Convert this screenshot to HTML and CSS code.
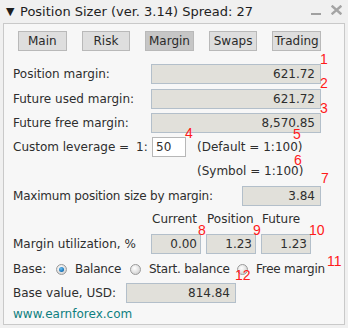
FILE: index.html
```html
<!DOCTYPE html>
<html>
<head>
<meta charset="utf-8">
<link rel="stylesheet" href="styles.css">
</head>
<body>
<div class="window">
  <div class="titlebar">
    <span class="arrow">▼</span>
    <span class="title">Position Sizer (ver. 3.14) Spread: 27</span>
    <span class="tb-icons">
      <span class="minimize"></span>
      <svg class="close" width="11" height="10" viewBox="0 0 11 10"><path d="M1.5 1.5 L9.5 8.5 M9.5 1.5 L1.5 8.5" stroke="#a4a4a4" stroke-width="2.4" stroke-linecap="square"/></svg>
    </span>
  </div>
  <div class="panel">
    <div class="tabs">
      <span class="tab">Main</span>
      <span class="tab">Risk</span>
      <span class="tab active">Margin</span>
      <span class="tab">Swaps</span>
      <span class="tab">Trading</span>
    </div>
    <div class="row r1"><span class="label">Position margin:</span><span class="field wide">621.72</span></div>
    <div class="row r2"><span class="label">Future used margin:</span><span class="field wide">621.72</span></div>
    <div class="row r3"><span class="label">Future free margin:</span><span class="field wide">8,570.85</span></div>
    <div class="row r4">
      <span class="label lev">Custom leverage =</span>
      <span class="ratio">1:</span>
      <span class="input">50</span>
      <span class="note">(Default = 1:100)</span>
    </div>
    <div class="row r5"><span class="note sym">(Symbol = 1:100)</span></div>
    <div class="row r6"><span class="label tight">Maximum position size by margin:</span><span class="field mid">3.84</span></div>
    <div class="row hdr">
      <span class="col">Current</span><span class="col">Position</span><span class="col">Future</span>
    </div>
    <div class="row r7">
      <span class="label">Margin utilization, %</span>
      <span class="cells"><span class="field small">0.00</span><span class="field small">1.23</span><span class="field small">1.23</span></span>
    </div>
    <div class="row r8">
      <span class="base">Base:</span>
      <span class="radio on"></span><span class="rlabel w1">Balance</span>
      <span class="radio"></span><span class="rlabel w2">Start. balance</span>
      <span class="radio"></span><span class="rlabel">Free margin</span>
    </div>
    <div class="row r9"><span class="label bv">Base value, USD:</span><span class="field bval">814.84</span></div>
    <div class="row r10"><span class="link">www.earnforex.com</span></div>
  </div>
  <span class="ann a1">1</span>
  <span class="ann a2">2</span>
  <span class="ann a3">3</span>
  <span class="ann a4">4</span>
  <span class="ann a5">5</span>
  <span class="ann a6">6</span>
  <span class="ann a7">7</span>
  <span class="ann a8">8</span>
  <span class="ann a9">9</span>
  <span class="ann a10">10</span>
  <span class="ann a11">11</span>
  <span class="ann a12">12</span>
</div>
</body>
</html>
```
FILE: styles.css
```css
* { box-sizing: border-box; }
html, body { margin: 0; padding: 0; }
body {
  background: #f0f0f0;
  font-family: "DejaVu Sans", sans-serif;
  font-size: 12px;
  color: #2e2e2e;
  white-space: nowrap;
}
.window {
  position: relative;
  width: 348px;
  height: 328px;
  background: #f0f0f0;
}
.titlebar {
  height: 23px;
  display: flex;
  align-items: center;
  padding-left: 6px;
  font-size: 13px;
  color: #1e1e1e;
}
.arrow { font-size: 11px; width: 14px; }
.title { flex: 1; }
.tb-icons { display: flex; align-items: center; padding-right: 6px; }
.minimize {
  display: block;
  width: 10px;
  height: 2px;
  background: #a0a0a0;
  margin-top: 5px;
  margin-right: 10px;
}
.close { display: block; margin-top: -3px; }
.panel {
  margin: 0 3px 0 3px;
  height: 302px;
  border: 1px solid #c9c9c9;
  background: #f7f7f7;
  padding: 7px 23px 0 9px;
}
.tabs {
  display: flex;
  gap: 15px;
  margin-left: 5px;
}
.tab {
  width: 50px;
  height: 20px;
  background: #dedede;
  border: 1px solid #b9b9b9;
  display: flex;
  align-items: center;
  justify-content: center;
  color: #2a2a2a;
}
.tab.active { background: #c6c6c6; }
.row {
  display: flex;
  align-items: center;
  height: 20px;
}
.label { flex: 1; }
.tight { letter-spacing: -0.2px; }
.field {
  height: 20px;
  background: #e1e0da;
  border: 1px solid #b3bfca;
  display: flex;
  align-items: center;
  justify-content: flex-end;
  padding-right: 5px;
  flex: none;
}
.wide { width: 170px; }
.mid { width: 79px; }
.small { width: 50px; padding-right: 3px; }
.r1 { margin-top: 13px; }
.r2 { margin-top: 5px; }
.r3 { margin-top: 4px; }
.r4 { margin-top: 4px; }
.lev { flex: none; width: 123px; }
.ratio { width: 16px; }
.input {
  width: 34px;
  height: 20px;
  background: #ffffff;
  border: 1px solid #b7b7b7;
  display: flex;
  align-items: center;
  padding-left: 3px;
}
.note { margin-left: 11px; }
.r5 { margin-top: 4px; }
.sym { margin-left: 184px; }
.r6 { margin-top: 5px; }
.hdr { margin-top: 3px; padding-left: 139px; gap: 5px; }
.col { width: 50px; flex: none; }
.r7 { margin-top: 5px; }
.cells { display: flex; gap: 5px; margin-right: 10px; }
.r8 { margin-top: 5px; }
.base { width: 43px; flex: none; }
.radio {
  width: 11px;
  height: 11px;
  border-radius: 50%;
  border: 1px solid #9a9a9a;
  background: radial-gradient(circle at 40% 35%, #ffffff 0%, #e6e6e6 45%, #c4c4c4 100%);
  position: relative;
  flex: none;
}
.radio.on::after {
  content: "";
  position: absolute;
  left: 2px;
  top: 2px;
  width: 5px;
  height: 5px;
  border-radius: 50%;
  background: radial-gradient(circle at 40% 35%, #6fc0f0 0%, #1f7fc4 55%, #0b4f8a 100%);
}
.rlabel {
  flex: none;
  margin-left: 8px;
  letter-spacing: -0.25px;
}
.w1 { width: 55px; }
.w2 { width: 88px; }
.r9 { margin-top: 4px; }
.bv { flex: none; width: 113px; }
.bval { width: 110px; }
.r10 { margin-top: 1px; }
.link { color: #0e7f80; }
.ann {
  position: absolute;
  font-family: "Liberation Sans", sans-serif;
  font-size: 14px;
  line-height: 14px;
  color: #ff1a1a;
}
.a1 { left: 320px; top: 52px; }
.a2 { left: 320px; top: 76px; }
.a3 { left: 320px; top: 101px; }
.a4 { left: 185px; top: 126px; }
.a5 { left: 293px; top: 127px; }
.a6 { left: 294px; top: 153px; }
.a7 { left: 321px; top: 171px; }
.a8 { left: 198px; top: 223px; }
.a9 { left: 253px; top: 223px; }
.a10 { left: 309px; top: 223px; }
.a11 { left: 327px; top: 254px; }
.a12 { left: 235px; top: 268px; }
```
